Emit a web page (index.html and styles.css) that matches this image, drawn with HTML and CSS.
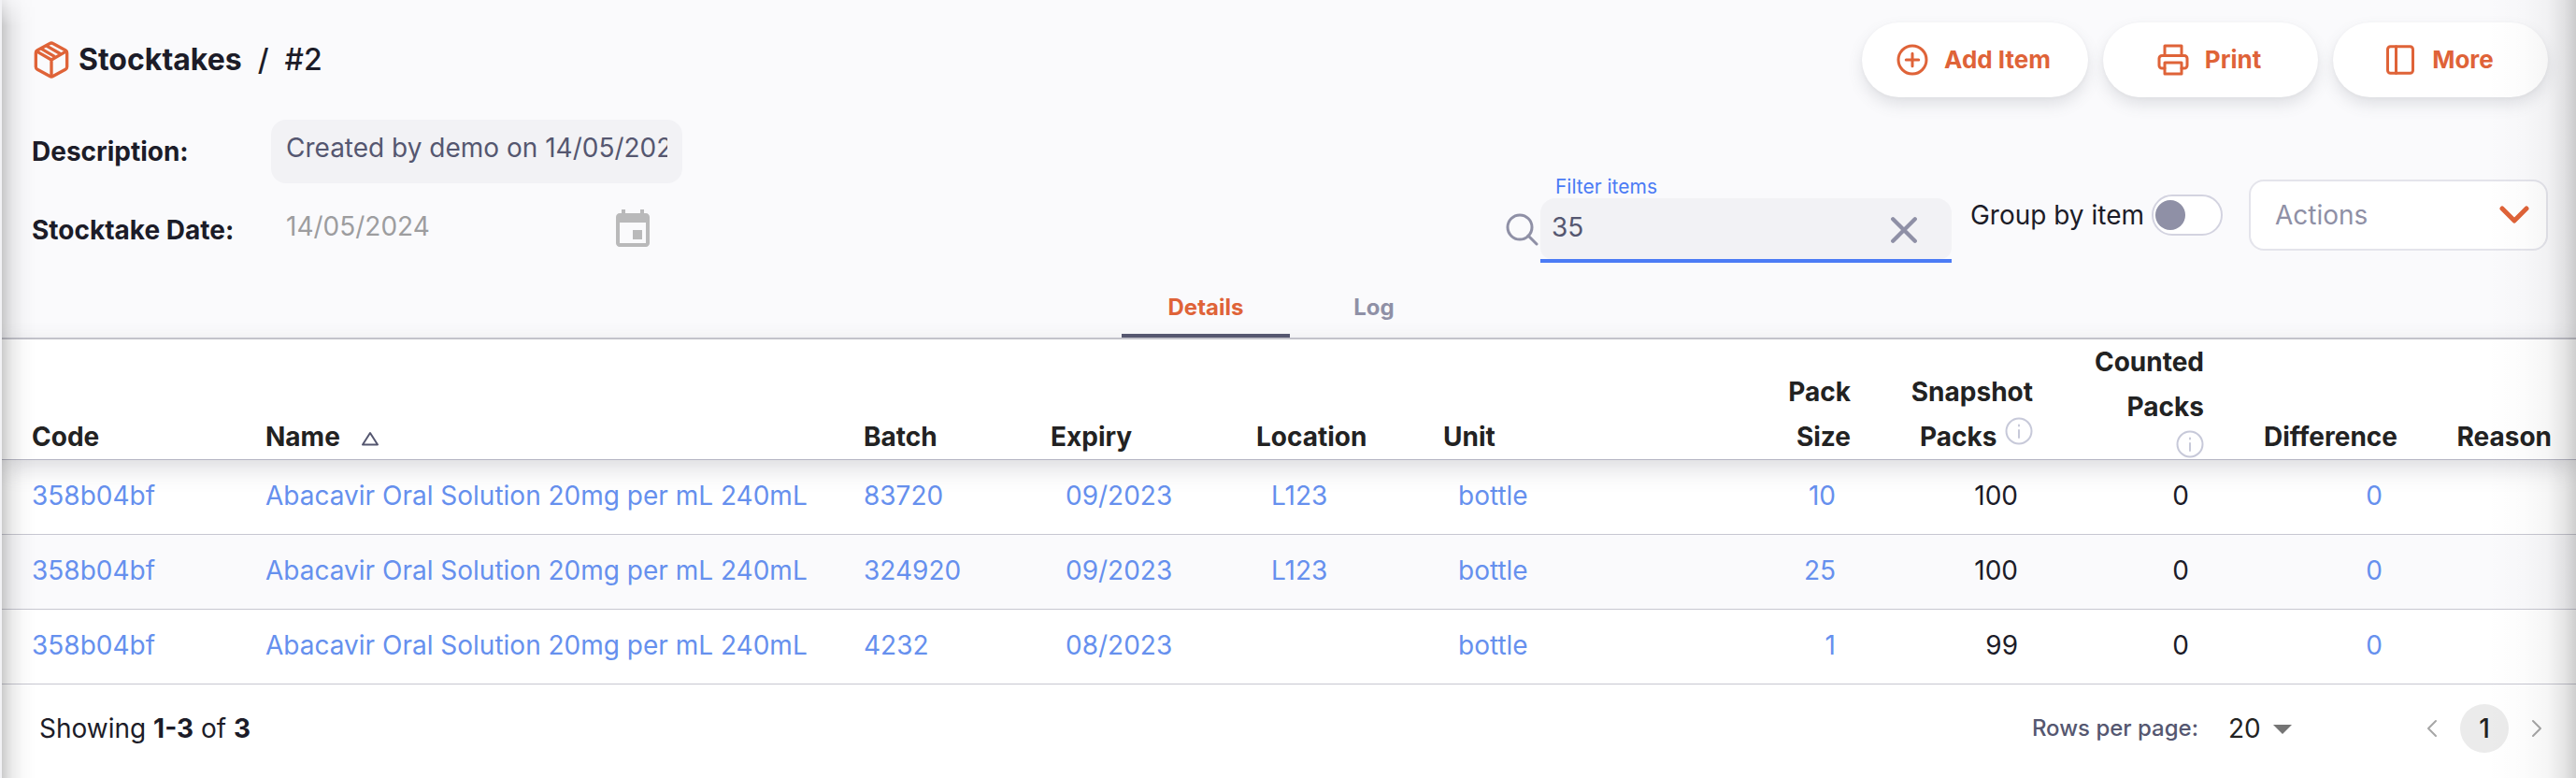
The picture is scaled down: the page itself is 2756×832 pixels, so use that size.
FILE: index.html
```
<!DOCTYPE html>
<html lang="en">
<head>
<meta charset="utf-8">
<title>Stocktakes / #2</title>
<link rel="stylesheet" href="styles.css">
</head>
<body>
<div class="page">
  <header class="appbar">
    <div class="titlebar">
      <nav class="crumbs" aria-label="Breadcrumb">
        <svg class="icon-box" viewBox="0 0 24 24"><path d="M22 16.500V7.500a2 2 0 0 0-1-1.700l-8-4.300a2 2 0 0 0-2 0l-8 4.300a2 2 0 0 0-1 1.700v9a2 2 0 0 0 1 1.700l8 4.300a2 2 0 0 0 2 0l8-4.300a2 2 0 0 0 1-1.700z"/><path d="M2.500 6.500 12 12l9.500-5.500M12 22V12M9.200 3.200l8 4.600M6 5.200l7.700 4.500"/></svg>
        <a class="crumb-link" href="#">Stocktakes</a>
        <span class="crumb-sep">/</span>
        <span>#2</span>
      </nav>
      <div class="buttons">
        <button class="pill" type="button"><svg class="icon-pill" viewBox="0 0 24 24"><circle cx="12" cy="12" r="10"/><path d="M12 7.500v9M7.500 12h9"/></svg>Add Item</button>
        <button class="pill" type="button"><svg class="icon-pill" viewBox="0 0 24 24"><path d="M6 9V2h12v7M6 18H4a2 2 0 0 1-2-2v-5a2 2 0 0 1 2-2h16a2 2 0 0 1 2 2v5a2 2 0 0 1-2 2h-2"/><path d="M6 14h12v8H6z"/></svg>Print</button>
        <button class="pill" type="button"><svg class="icon-pill" viewBox="0 0 24 24"><rect x="3" y="2.500" width="18" height="19" rx="2"/><path d="M9 2.500v19"/></svg>More</button>
      </div>
    </div>
    <div class="toolbar">
      <div class="fields">
        <label class="field-label" for="desc">Description:</label>
        <input class="text-input" id="desc" type="text" value="Created by demo on 14/05/2024">
        <label class="field-label" for="date">Stocktake Date:</label>
        <div class="date-field">
          <input class="date-input" id="date" type="text" value="14/05/2024" disabled>
          <svg class="icon-date" viewBox="0 0 24 24"><path d="M17 12h-5v5h5v-5zM16 1v2H8V1H6v2H5c-1.110 0-1.990.9-1.990 2L3 19c0 1.100.89 2 2 2h14c1.100 0 2-.9 2-2V5c0-1.100-.9-2-2-2h-1V1h-2zm3 18H5V8h14v11z"/></svg>
        </div>
      </div>
      <div class="filters">
        <div class="search">
          <svg class="icon-search" viewBox="0 0 36 36"><circle cx="16" cy="15" r="13"/><path d="M25 24l9 9"/></svg>
          <div class="search-field">
            <label class="search-label" for="filter">Filter items</label>
            <div class="search-box">
              <input class="search-input" id="filter" type="text" value="35">
              <button class="clear" type="button" aria-label="Clear"><svg class="icon-clear" viewBox="0 0 28 28"><path d="M3 3l22 22M25 3L3 25"/></svg></button>
            </div>
          </div>
        </div>
        <label class="group"><span>Group by item</span><input class="switch" type="checkbox" role="switch"></label>
        <div class="actions">
          <select class="actions-select" aria-label="Actions"><option>Actions</option></select>
          <svg class="icon-chevron" viewBox="0 0 32 20"><path d="M3 3l13 13L29 3"/></svg>
        </div>
      </div>
    </div>
    <div class="tabs" role="tablist">
      <button class="tab tab-active" type="button" role="tab" aria-selected="true">Details</button>
      <button class="tab" type="button" role="tab" aria-selected="false">Log</button>
    </div>
  </header>
  <main>
    <table class="grid">
      <colgroup><col class="c-code"><col class="c-name"><col class="c-std"><col class="c-exp"><col class="c-std"><col class="c-unit"><col class="c-pack"><col class="c-snap"><col class="c-count"><col class="c-diff"><col class="c-reason"></colgroup>
      <thead>
        <tr>
          <th>Code</th>
          <th>Name<svg class="icon-sort" viewBox="0 0 20 16"><path d="M10 2l8 12.500H2z"/></svg></th>
          <th>Batch</th><th>Expiry</th><th>Location</th><th>Unit</th>
          <th class="num">Pack<br>Size</th>
          <th class="num">Snapshot<br>Packs <svg class="icon-info icon-raised" viewBox="0 0 30 30"><circle cx="15" cy="15" r="13.500"/><path d="M15 14v8M15 8.500v1"/></svg></th>
          <th class="num">Counted<br>Packs<svg class="icon-info icon-below" viewBox="0 0 30 30"><circle cx="15" cy="15" r="13.500"/><path d="M15 14v8M15 8.500v1"/></svg></th>
          <th class="num">Difference</th>
          <th class="reason">Reason</th>
        </tr>
      </thead>
      <tbody>
        <tr><td>358b04bf</td><td>Abacavir Oral Solution 20mg per mL 240mL</td><td>83720</td><td class="inset">09/2023</td><td class="inset">L123</td><td class="inset">bottle</td><td class="num inset">10</td><td class="num inset dark">100</td><td class="num inset dark">0</td><td class="num inset">0</td><td></td></tr>
        <tr><td>358b04bf</td><td>Abacavir Oral Solution 20mg per mL 240mL</td><td>324920</td><td class="inset">09/2023</td><td class="inset">L123</td><td class="inset">bottle</td><td class="num inset">25</td><td class="num inset dark">100</td><td class="num inset dark">0</td><td class="num inset">0</td><td></td></tr>
        <tr><td>358b04bf</td><td>Abacavir Oral Solution 20mg per mL 240mL</td><td>4232</td><td class="inset">08/2023</td><td class="inset"></td><td class="inset">bottle</td><td class="num inset">1</td><td class="num inset dark">99</td><td class="num inset dark">0</td><td class="num inset">0</td><td></td></tr>
      </tbody>
    </table>
  </main>
  <footer class="footer">
    <p class="showing">Showing <b>1-3</b> of <b>3</b></p>
    <div class="pager">
      <label class="rows-label" for="rows">Rows per page:</label>
      <span class="rows">
        <select class="rows-select" id="rows"><option>20</option></select>
        <svg class="icon-caret" viewBox="0 0 20 10"><path d="M0 0h20L10 10z"/></svg>
      </span>
      <nav class="pages" aria-label="Pages">
        <button class="arrow" type="button" aria-label="Previous"><svg class="icon-arrow" viewBox="0 0 12 20"><path d="M10 2L2 10l8 8"/></svg></button>
        <button class="page-num" type="button">1</button>
        <button class="arrow" type="button" aria-label="Next"><svg class="icon-arrow" viewBox="0 0 12 20"><path d="M2 2l8 8-8 8"/></svg></button>
      </nav>
    </div>
  </footer>
</div>
</body>
</html>
```
FILE: styles.css
```
* { box-sizing: border-box; }

body {
  margin: 0;
  background: #fff;
  color: #1c1c28;
  font-family: Inter, "Liberation Sans", sans-serif;
  font-size: 28px;
  line-height: 48px;
}

button, input, select { font: inherit; color: inherit; border: 0; background: none; margin: 0; padding: 0; }
svg { fill: none; stroke: currentColor; stroke-width: 2; stroke-linecap: round; stroke-linejoin: round; flex: none; display: block; }

.page { position: relative; min-height: 100vh; border-left: 2px solid #f2f2f5; overflow: hidden; }

/* Soft shading along the left and right edges of the content pane */
.page::before, .page::after { content: ""; position: absolute; top: 0; bottom: 0; pointer-events: none; z-index: 2; }
.page::before {
  left: 0; width: 36px;
  background: linear-gradient(to right, rgba(0,0,0,.2), rgba(0,0,0,.08) 30%, rgba(0,0,0,.02) 65%, transparent);
  mask-image: linear-gradient(to bottom, rgba(0,0,0,.3), #000 28px);
}
.page::after { right: 0; width: 96px; background: linear-gradient(to left, rgba(0,0,0,.19), rgba(0,0,0,.1) 13%, rgba(0,0,0,.035) 32%, rgba(0,0,0,.01) 60%, transparent); }

.appbar { background: #fafafc; border-bottom: 2px solid #c9c9d1; }
.titlebar { display: flex; justify-content: space-between; padding: 24px 30px 0 32px; }
.crumbs { display: flex; align-items: center; height: 80px; font-size: 32px; font-weight: 500; }
.crumb-link { color: inherit; text-decoration: none; font-weight: 700; margin-left: 8px; }
.crumb-sep { margin: 0 17px; }
.icon-box { width: 42px; height: 40px; color: #df6338; }

.buttons { display: flex; gap: 16px; }
.pill {
  display: flex; align-items: center; justify-content: center; gap: 16px;
  min-width: 230px; height: 80px; padding: 0 40px 0 36px; border-radius: 48px;
  background: #fff; color: #df6338; font-size: 26px; font-weight: 700;
  box-shadow: 0 8px 16px rgba(96,97,112,.16), 0 1px 4px rgba(40,41,61,.04);
}
.icon-pill { width: 36px; height: 36px; }

.toolbar { display: flex; justify-content: space-between; padding: 24px 30px 0 32px; height: 190px; }
.fields { display: grid; grid-template-columns: 256px 440px; grid-template-rows: 68px 68px; row-gap: 16px; align-items: center; }
.field-label { font-weight: 700; }
.text-input { width: 100%; height: 68px; padding: 0 16px 8px; border-radius: 16px; background: #f2f2f5; color: #555770; }
.date-field { display: flex; align-items: center; justify-content: space-between; padding: 0 29px 0 16px; height: 68px; }
.date-input { width: 240px; height: 60px; padding-bottom: 8px; color: #9d9d9f; }
.icon-date { width: 48px; height: 48px; fill: #b9b9ba; stroke: none; }

.filters { display: flex; align-items: center; height: 156px; padding-top: 48px; }
.search { display: flex; align-items: center; gap: 2px; padding-top: 9px; }
.icon-search { width: 36px; height: 36px; color: #8f90a6; stroke-width: 3; margin-top: 22px; }
.search-field { width: 440px; border-bottom: 4px solid #4b7bf5; }
.search-label { display: block; height: 24px; padding-left: 16px; font-size: 21px; line-height: 24px; color: #4b7bf5; }
.search-box { display: flex; align-items: center; height: 65px; padding: 0 36px 0 12px; background: #f2f2f5; border-radius: 16px 16px 12px 12px; color: #555770; }
.search-input { flex: 1; min-width: 0; height: 65px; padding-bottom: 4px; outline: 0; }
.clear { color: #8f90a6; padding-top: 2px; }
.icon-clear { width: 30px; height: 30px; stroke-width: 4; }

.group { display: flex; align-items: center; gap: 8px; margin-left: 20px; }
.switch { appearance: none; width: 76px; height: 44px; padding: 4px 2px; border: 2px solid #d3d3e0; border-radius: 22px; background: #fff; }
.switch::before { content: ""; display: block; width: 32px; height: 32px; border-radius: 50%; background: #8f90a6; }
.actions { position: relative; margin-left: 28px; color: #8f90a6; }
.actions-select { appearance: none; display: block; width: 320px; height: 76px; padding: 0 26px; border: 2px solid #e4e4eb; border-radius: 16px; background: #fff; }
.icon-chevron { position: absolute; right: 20px; top: 28px; width: 32px; height: 20px; color: #df6338; stroke-width: 5; pointer-events: none; }

.tabs { display: flex; justify-content: center; padding-left: 2px; }
.tab { width: 180px; height: 67px; padding-top: 6px; font-size: 24px; font-weight: 700; color: #8f90a6; border-bottom: 4px solid transparent; }
.tab-active { color: #df6338; border-bottom-color: #555770; }

.grid { width: 100%; table-layout: fixed; border-collapse: separate; border-spacing: 0; }
.c-code { width: 266px; }
.c-name { width: 640px; }
.c-std { width: 200px; }
.c-exp { width: 220px; }
.c-unit { width: 235px; }
.c-pack { width: 217px; }
.c-snap { width: 195px; }
.c-count { width: 183px; }
.c-diff { width: 207px; }
.c-reason { width: auto; }
.grid thead { box-shadow: 0 8px 24px rgba(96,97,112,.24); position: relative; }
.grid th { padding: 0 0 0 16px; text-align: left; vertical-align: bottom; font-weight: 700; color: #222; white-space: nowrap; border-bottom: 1px solid #b5b5c3; }
.grid td { height: 80px; padding: 0 0 4px 16px; border-bottom: 1px solid #c7c7d1; color: #6690ee; white-space: nowrap; }
.grid th:first-child, .grid td:first-child { padding-left: 32px; }
.grid tbody tr:nth-child(even) { background: #fafafc; }
.grid td.inset { padding-left: 32px; }
.grid .num { text-align: right; padding: 0; }
.grid td.num.inset { padding: 0 16px 4px 0; }
.grid td.dark { color: #1c1c28; }
.grid th.reason { padding: 0 26px 0 0; text-align: right; }
.icon-sort { display: inline-block; width: 20px; height: 16px; margin-left: 22px; color: #555770; }
.icon-info { width: 30px; height: 30px; color: #c7c9d9; }
.icon-raised { display: inline-block; vertical-align: 1px; margin-left: 2px; }
.icon-below { margin: 1px 0 1px auto; }

.footer { display: flex; align-items: center; justify-content: space-between; padding: 21px 30px 0 40px; }
.showing { margin: 0; }
.pager { display: flex; align-items: center; }
.rows-label { font-size: 24px; font-weight: 500; color: #555770; }
.rows { position: relative; margin-left: 32px; }
.rows-select { appearance: none; display: block; width: 72px; height: 48px; color: #222; }
.icon-caret { position: absolute; right: 4px; top: 20px; width: 20px; height: 10px; fill: #757575; stroke: none; pointer-events: none; }
.pages { display: flex; align-items: center; gap: 18px; margin-left: 134px; }
.page-num { width: 52px; height: 52px; border-radius: 50%; background: #ebebeb; color: #222; font-weight: 500; }
.arrow { padding: 0 6px; color: #a6a6a6; }
.icon-arrow { width: 12px; height: 20px; }
```
